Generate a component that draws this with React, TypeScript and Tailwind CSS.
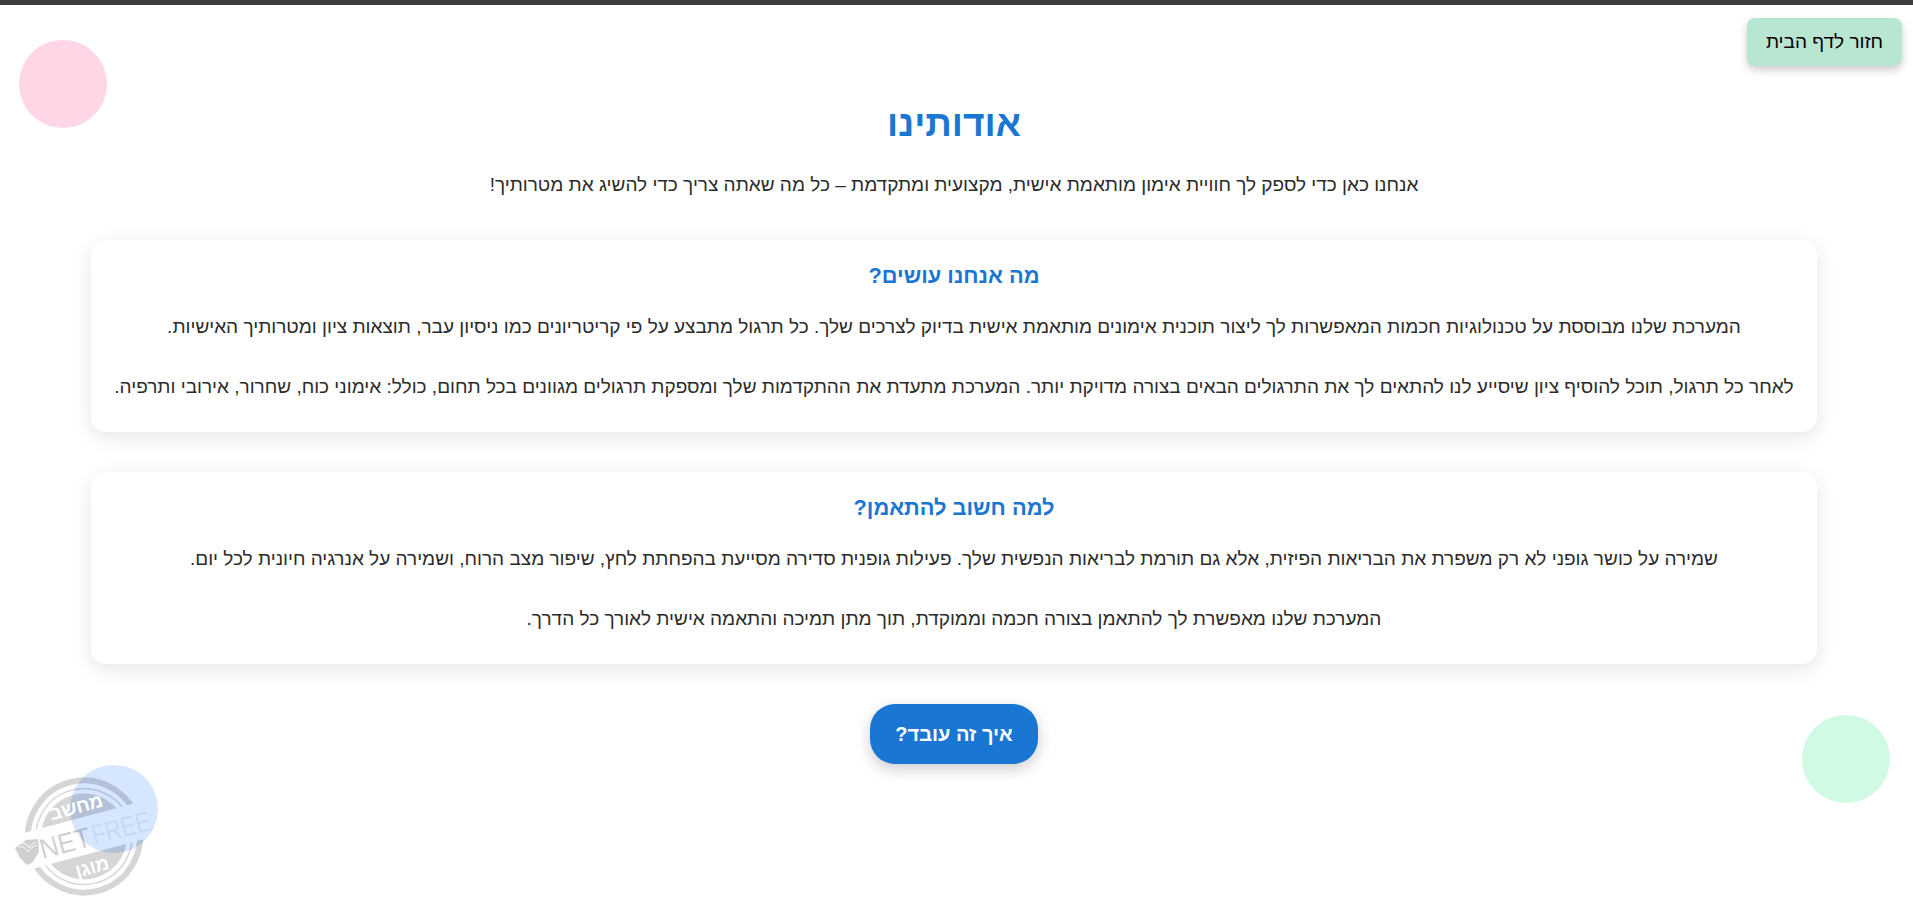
const Logo = () => (
  <svg viewBox="0 0 140 130" className="w-[140px] h-[130px] overflow-visible" direction="ltr">
    <defs>
      <mask id="band">
        <rect x="-100" y="-100" width="200" height="200" fill="#fff" />
        <rect x="-80" y="-19" width="160" height="37" fill="#000" />
      </mask>
    </defs>
    <g transform="translate(69 66.5) rotate(-15)">
      <g mask="url(#band)">
        <circle r="56" fill="none" stroke="rgba(0,0,0,0.16)" strokeWidth="6" />
        <circle r="48" fill="none" stroke="rgba(0,0,0,0.16)" strokeWidth="1.5" />
        <circle r="43" fill="rgba(0,0,0,0.16)" />
      </g>
      <text x="0" y="-24" textAnchor="middle" fontFamily="Liberation Sans" fontWeight="700" fontSize="19" fill="#fff">מחשב</text>
      <text x="0" y="38" textAnchor="middle" fontFamily="Liberation Sans" fontWeight="700" fontSize="19" fill="#fff">מוגן</text>
      <text x="-46" y="11" fontFamily="Liberation Sans" fontSize="28" textLength="52" lengthAdjust="spacingAndGlyphs" fill="rgba(0,0,0,0.2)">NET</text>
      <text x="8" y="11" fontFamily="Liberation Sans" fontSize="28" textLength="60" lengthAdjust="spacingAndGlyphs" fill="rgba(0,0,0,0.07)">FREE</text>
    </g>
    <path d="M0 78l11-8 12-1 1 13-7 11-5 2-7-7z" fill="#d0d0d0" />
    <path d="M3 77c5-1 8 1 10 5 2-3 5-6 9-7M6 73c4 0 7 2 8 5 2-3 4-5 7-6" fill="none" stroke="#fff" strokeWidth="1" />
  </svg>
);

const Card = ({ title, items }: { title: string; items: string[] }) => (
  <section className="bg-white rounded-[15px] shadow-[0_5px_20px_rgba(0,0,0,0.1)] pt-[23px] px-5 pb-[30px]">
    <h2 className="text-[21.8px] leading-[26px] font-bold text-[#1976d2] mb-[23px]">{title}</h2>
    <div className="flex flex-col gap-[30px]">
      {items.map((t) => (
        <p key={t} className="text-[19px] leading-[30px] text-[#2b2b2b]">{t}</p>
      ))}
    </div>
  </section>
);

export default function App() {
  return (
    <div dir="rtl" className="relative h-[914px] overflow-hidden bg-white text-center font-['Liberation_Sans',Arial,sans-serif]">
      <div className="h-[5px] bg-[#3c3c3c]" />
      <div className="absolute left-[19px] top-[40px] w-[88px] h-[88px] rounded-full bg-[#ffd6e5]" />
      <div className="absolute left-[70px] top-[765px] w-[88px] h-[88px] rounded-full bg-[#d6e6ff]" />
      <div className="absolute left-[1802px] top-[715px] w-[88px] h-[88px] rounded-full bg-[#d1fae5]" />
      <div className="absolute left-[15px] top-[770px]"><Logo /></div>
      <header className="relative flex pt-[13px] pr-[11px]">
        <button className="w-[155px] h-[48px] rounded-[8px] bg-[#b8e6d3] text-black text-[19px] shadow-[0_4px_8px_rgba(0,0,0,0.2)]">חזור לדף הבית</button>
      </header>
      <main className="relative w-[1908px] mr-auto ml-0 flex flex-col items-center px-[91px] pt-[35px]">
        <h1 className="text-[37px] leading-[46px] font-bold text-[#1976d2]">אודותינו</h1>
        <p className="text-[19px] leading-[26px] text-[#2b2b2b] mt-[25px] mb-[42px]">אנחנו כאן כדי לספק לך חוויית אימון מותאמת אישית, מקצועית ומתקדמת – כל מה שאתה צריך כדי להשיג את מטרותיך!</p>
        <div className="flex flex-col gap-10 w-full">
          <Card title="מה אנחנו עושים?" items={[
            "המערכת שלנו מבוססת על טכנולוגיות חכמות המאפשרות לך ליצור תוכנית אימונים מותאמת אישית בדיוק לצרכים שלך. כל תרגול מתבצע על פי קריטריונים כמו ניסיון עבר, תוצאות ציון ומטרותיך האישיות.",
            "לאחר כל תרגול, תוכל להוסיף ציון שיסייע לנו להתאים לך את התרגולים הבאים בצורה מדויקת יותר. המערכת מתעדת את ההתקדמות שלך ומספקת תרגולים מגוונים בכל תחום, כולל: אימוני כוח, שחרור, אירובי ותרפיה.",
          ]} />
          <Card title="למה חשוב להתאמן?" items={[
            "שמירה על כושר גופני לא רק משפרת את הבריאות הפיזית, אלא גם תורמת לבריאות הנפשית שלך. פעילות גופנית סדירה מסייעת בהפחתת לחץ, שיפור מצב הרוח, ושמירה על אנרגיה חיונית לכל יום.",
            "המערכת שלנו מאפשרת לך להתאמן בצורה חכמה וממוקדת, תוך מתן תמיכה והתאמה אישית לאורך כל הדרך.",
          ]} />
        </div>
        <button className="mt-10 w-[168px] h-[60px] rounded-[25px] bg-[#1976d2] text-white text-[20px] font-bold shadow-[0_5px_15px_rgba(0,0,0,0.2)]">איך זה עובד?</button>
      </main>
    </div>
  );
}
